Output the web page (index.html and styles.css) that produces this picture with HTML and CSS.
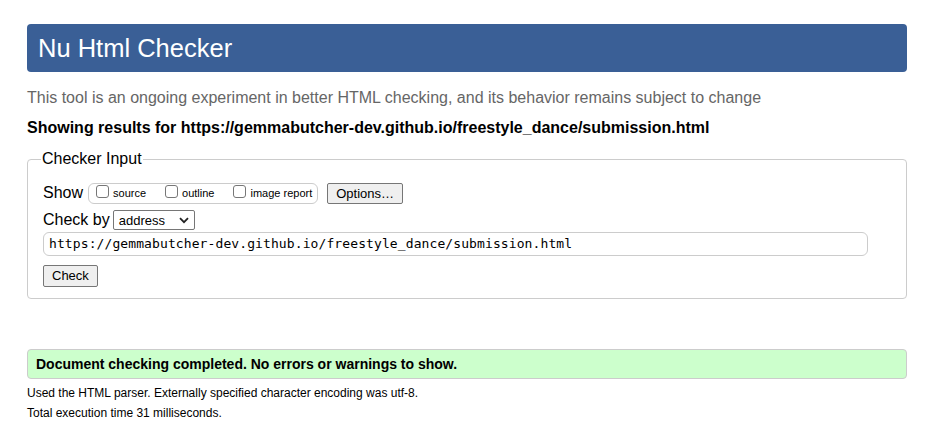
FILE: index.html
```html
<!DOCTYPE html>
<html>
<head>
<meta charset="utf-8">
<link rel="stylesheet" href="styles.css">
</head>
<body>
<h1 class="title">Nu Html Checker</h1>
<p class="intro">This tool is an ongoing experiment in better HTML checking, and its behavior remains subject to change</p>
<p class="showing">Showing results for https://gemmabutcher-dev.github.io/freestyle_dance/submission.html</p>
<fieldset class="input">
  <legend>Checker Input</legend>
  <div class="row">
    <span class="label">Show</span>
    <span class="opts">
      <label class="opt"><span class="cb"></span>source</label>
      <label class="opt"><span class="cb"></span>outline</label>
      <label class="opt"><span class="cb"></span>image report</label>
    </span>
    <span class="btn options">Options…</span>
  </div>
  <div class="row row2">
    <span class="label">Check by</span>
    <span class="select">address<svg width="10" height="7" viewBox="0 0 10 7"><path d="M1 1.2 L5 5.2 L9 1.2" fill="none" stroke="#222" stroke-width="1.8"/></svg></span>
  </div>
  <div class="url">https://gemmabutcher-dev.github.io/freestyle_dance/submission.html</div>
  <div class="row3"><span class="btn check">Check</span></div>
</fieldset>
<div class="success">Document checking completed. No errors or warnings to show.</div>
<p class="details">Used the HTML parser. Externally specified character encoding was utf-8.</p>
<p class="details">Total execution time 31 milliseconds.</p>
</body>
</html>
```
FILE: styles.css
```css
html, body { background: #fff; }
body {
  margin: 0;
  padding: 24px 25px 0 27px;
  font-family: "Liberation Sans", Arial, sans-serif;
  color: #000;
}
.title {
  margin: 0;
  height: 48px;
  line-height: 48px;
  background: #3a5f96;
  color: #fff;
  font-size: 25.5px;
  font-weight: normal;
  padding: 0 11px;
  border-radius: 4px;
}
.intro {
  margin: 16px 0 0;
  font-size: 16px;
  line-height: 20px;
  color: #666;
}
.showing {
  margin: 10px 0 0;
  font-size: 16px;
  line-height: 20px;
  font-weight: bold;
}
.input {
  margin: 12px 0 0;
  border: 1px solid #ccc;
  border-radius: 4px;
  padding: 2px 15px 11px 15px;
}
.input legend {
  font-size: 16px;
  padding: 0 1px;
  margin-left: -2px;
  line-height: 18px;
}
.row {
  display: flex;
  align-items: center;
  height: 22px;
  margin-top: 12px;
}
.label { font-size: 16px; }
.opts {
  display: flex;
  align-items: center;
  margin-left: 5px;
  border: 1px solid #ccc;
  border-radius: 6px;
  height: 19px;
  padding: 0 5px 0 7px;
}
.opt {
  display: flex;
  align-items: center;
  font-size: 11px;
  margin-right: 19px;
}
.opt:last-child { margin-right: 0; }
.cb {
  display: inline-block;
  width: 11px;
  height: 11px;
  border: 1px solid #777;
  border-radius: 3px;
  margin-right: 4px;
  margin-top: -3px;
}
.btn {
  display: inline-block;
  font-size: 13px;
  background: #efefef;
  border: 1px solid #767676;
  border-radius: 2px;
  height: 19px;
  line-height: 19px;
  box-sizing: content-box;
}
.options {
  margin-left: 9px;
  padding: 0 8px 0 8px;
}
.row2 { margin-top: 6px; height: 20px; }
.select {
  display: inline-flex;
  align-items: center;
  justify-content: space-between;
  margin-left: 3px;
  width: 70px;
  height: 18px;
  border: 1px solid #767676;
  border-radius: 2px;
  font-size: 13px;
  padding: 0 5px 0 5px;
}
.url {
  margin-top: 2px;
  width: 812px;
  height: 22px;
  line-height: 22px;
  border: 1px solid #ccc;
  border-radius: 6px;
  padding: 0 6px 0 5px;
  font-family: "DejaVu Sans Mono", monospace;
  font-size: 13px;
  letter-spacing: 0.1px;
}
.row3 { margin-top: 9px; }
.check { padding: 0 8px; height: 20px; line-height: 20px; }
.success {
  margin-top: 50px;
  height: 28px;
  line-height: 28px;
  background: #ccffcc;
  border: 1px solid #ccc;
  border-radius: 4px;
  padding: 0 8px;
  font-size: 14px;
  font-weight: bold;
}
.details {
  margin: 7px 0 0;
  font-size: 12px;
  line-height: 14px;
}
.details + .details { margin-top: 6px; }
```
